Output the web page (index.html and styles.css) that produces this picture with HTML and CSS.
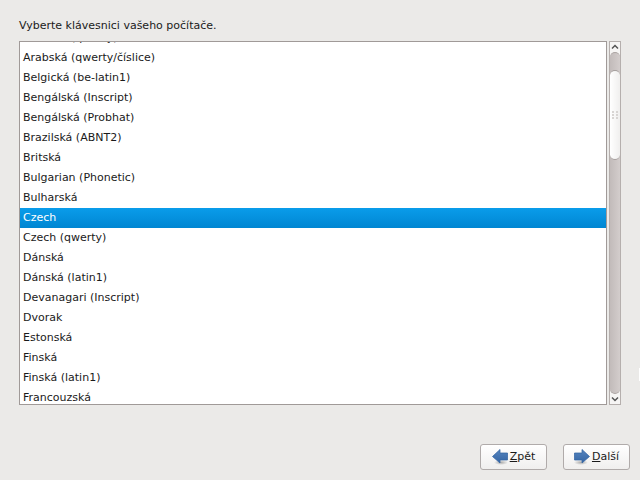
FILE: index.html
```html
<!DOCTYPE html>
<html lang="cs">
<head>
    <meta charset="utf-8">
    <title>Klávesnice</title>
    <link rel="stylesheet" href="styles.css">
</head>
<body>
    <main class="content">
        <label class="prompt" for="keyboard">Vyberte klávesnici vašeho počítače.</label>

        <div class="list-area">
            <select class="keyboard-list" id="keyboard" size="18">
                <option>Arabská (qwerty)</option>
                <option>Arabská (qwerty/číslice)</option>
                <option>Belgická (be-latin1)</option>
                <option>Bengálská (Inscript)</option>
                <option>Bengálská (Probhat)</option>
                <option>Brazilská (ABNT2)</option>
                <option>Britská</option>
                <option>Bulgarian (Phonetic)</option>
                <option>Bulharská</option>
                <option selected>Czech</option>
                <option>Czech (qwerty)</option>
                <option>Dánská</option>
                <option>Dánská (latin1)</option>
                <option>Devanagari (Inscript)</option>
                <option>Dvorak</option>
                <option>Estonská</option>
                <option>Finská</option>
                <option>Finská (latin1)</option>
                <option>Francouzská</option>
            </select>

            <div class="scrollbar" aria-hidden="true">
                <svg class="arrow" viewBox="0 0 10 10"><path d="M2 6.5 L5 3.5 L8 6.5"/></svg>
                <div class="track">
                    <div class="thumb">
                        <svg class="grip" viewBox="0 0 6 8"><path d="M0 0h2v2h-2zM4 0h2v2h-2zM0 3h2v2h-2zM4 3h2v2h-2zM0 6h2v2h-2zM4 6h2v2h-2z"/></svg>
                    </div>
                </div>
                <svg class="arrow" viewBox="0 0 10 10"><path d="M2 3.5 L5 6.5 L8 3.5"/></svg>
            </div>
        </div>
    </main>

    <footer class="buttons">
        <button type="button" accesskey="z">
            <svg class="icon" viewBox="0 0 16 16">
                <defs>
                    <linearGradient id="blue" x1="0" y1="0" x2="0" y2="1">
                        <stop offset="0" stop-color="#5584be"/>
                        <stop offset="1" stop-color="#3465a4"/>
                    </linearGradient>
                    <radialGradient id="shade">
                        <stop offset="0" stop-opacity="0.3"/>
                        <stop offset="1" stop-opacity="0"/>
                    </radialGradient>
                </defs>
                <ellipse class="shadow" cx="9" cy="13.5" rx="7" ry="2.5"/>
                <path class="arrow-shape" d="M8 0.5 L0.5 7.5 L8 14 V11 H15.5 V4 H8 Z"/>
            </svg>
            <span><u>Z</u>pět</span>
        </button>
        <button type="button" accesskey="d">
            <svg class="icon" viewBox="0 0 16 16">
                <ellipse class="shadow" cx="7" cy="13.5" rx="7" ry="2.5"/>
                <path class="arrow-shape" d="M8 0.5 L15.5 7.5 L8 14 V11 H0.5 V4 H8 Z"/>
            </svg>
            <span><u>D</u>alší</span>
        </button>
    </footer>

    <div class="edge-mark"></div>

    <script>
        const list = document.getElementById('keyboard');

        function scrollList() {
            list.scrollTop = 14;
        }

        scrollList();
        window.addEventListener('load', scrollList);
    </script>
</body>
</html>
```

FILE: styles.css
```css
:root {
    --bg-color: #ebeae8;
    --border: #a09a98;
    --text-color: #1a1a1a;
}

* {
    box-sizing: border-box;
}

body {
    display: flex;
    flex-direction: column;
    height: 100vh;
    margin: 0;
    overflow: hidden;
    background: var(--bg-color);
    color: var(--text-color);
    font: 11px/20px "DejaVu Sans", sans-serif;
}

.content {
    display: flex;
    flex: 1;
    flex-direction: column;
    gap: 5px;
    min-height: 0;
    padding: 16px 19px 0;
}

.list-area {
    display: flex;
    flex: 1;
    gap: 2px;
    min-height: 0;
}

.keyboard-list {
    flex: 1;
    height: 100%;
    padding: 0;
    border: 1px solid var(--border);
    border-radius: 0;
    outline: none;
    background: white;
    color: var(--text-color);
    font: inherit;
    scrollbar-width: none;
}

.keyboard-list option {
    height: 20px;
    min-height: 20px;
    padding: 3px 3px 0;
}

.keyboard-list option:checked {
    background: linear-gradient(#0a9cea, #0086d2);
    color: white;
}

/* scrollbar */
.scrollbar {
    display: flex;
    flex-direction: column;
    width: 12px;
    border: 1px solid #b5afad;
    background: #f6f5f4;
}

.arrow {
    width: 10px;
    height: 10px;
    fill: none;
    stroke: #555;
    stroke-width: 1.5;
}

.track {
    flex: 1;
    padding-top: 17px;
    border: solid #aaa3a1;
    border-width: 1px 0;
    border-radius: 5px;
    background: linear-gradient(to right, #c2bbba, #d3cdcc);
}

.thumb {
    display: flex;
    align-items: center;
    justify-content: center;
    height: 28%;
    border: solid #a59f9d;
    border-width: 1px 0;
    border-radius: 5px;
    background: linear-gradient(to right, #fff, #f0efee);
}

.grip {
    width: 6px;
    height: 8px;
    fill: #d8d5d3;
}

/* buttons */
.buttons {
    display: flex;
    justify-content: flex-end;
    gap: 16px;
    padding: 39px 10px 10px;
}

button {
    display: flex;
    align-items: center;
    justify-content: center;
    gap: 2px;
    width: 67px;
    height: 26px;
    padding: 0;
    border: 1px solid #b0abaa;
    border-radius: 3px;
    background: linear-gradient(#fff, #f0efee);
    color: var(--text-color);
    font: inherit;
}

.icon {
    width: 16px;
    height: 16px;
}

.arrow-shape {
    fill: url(#blue);
    stroke: #3465a4;
    stroke-width: 0.75;
}

.shadow {
    fill: url(#shade);
}

.edge-mark {
    position: absolute;
    top: 368px;
    right: 0;
    width: 1px;
    height: 13px;
    background: white;
}
```
